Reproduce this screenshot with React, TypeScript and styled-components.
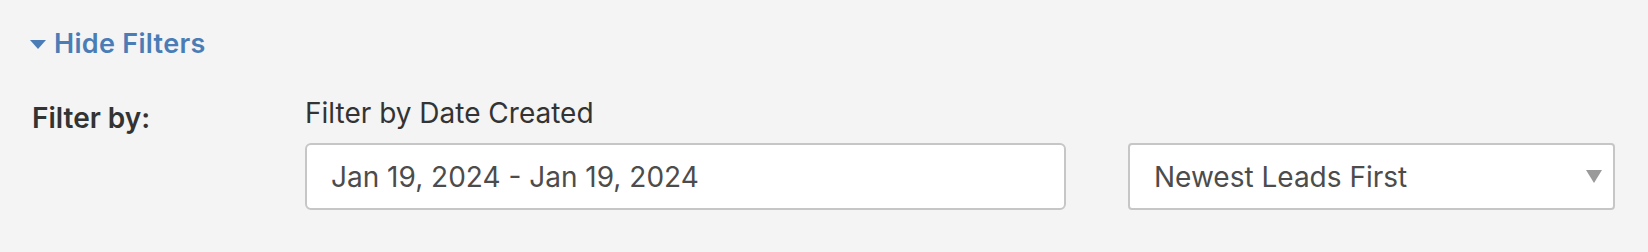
import styled, { createGlobalStyle } from "styled-components";

const GlobalStyle = createGlobalStyle`
  html, body {
    margin: 0;
    padding: 0;
    background-color: #f4f4f4;
  }
  body {
    font-family: Inter, "Noto Sans", sans-serif;
  }
`;

const Page = styled.div`
  width: 1648px;
  height: 252px;
  padding-top: 29px;
  box-sizing: border-box;
  background-color: #f4f4f4;
`;

const ToggleLink = styled.a`
  display: inline-flex;
  align-items: center;
  gap: 8px;
  margin-left: 30px;
  height: 30px;
  line-height: 30px;
  font-size: 27px;
  letter-spacing: 0.3px;
  font-weight: 600;
  color: #4a7db6;
  text-decoration: none;
  cursor: pointer;
`;

const Caret = styled.svg`
  width: 16px;
  height: 9px;
  fill: #4a7db6;
  margin-top: 1px;
`;

const FilterSection = styled.div`
  display: flex;
  margin-top: 38px;
`;

const SectionTitle = styled.div`
  width: 273px;
  padding-left: 32px;
  padding-top: 4px;
  font-size: 28px;
  line-height: 34px;
  font-weight: 600;
  color: #333333;
`;

const FieldGroup = styled.div`
  display: flex;
  flex-direction: column;
`;

const FieldLabel = styled.label`
  font-size: 28px;
  line-height: 32px;
  color: #333333;
  margin-bottom: 14px;
`;

const Controls = styled.div`
  display: flex;
  gap: 62px;
`;

const Field = styled.div<{ $width: number; $radius: number }>`
  width: ${(p) => p.$width}px;
  height: 67px;
  box-sizing: border-box;
  border: 2px solid #c6c6c6;
  border-radius: ${(p) => p.$radius}px;
  background-color: #ffffff;
  padding: 0 11px 0 24px;
  display: flex;
  align-items: center;
  justify-content: space-between;
  font-size: 28px;
  color: #4c4c4c;
`;

const SelectArrow = styled.svg`
  width: 16px;
  height: 13px;
  fill: #9a9a9a;
`;

export default function App() {
  return (
    <>
      <GlobalStyle />
      <Page>
        <ToggleLink>
          <Caret viewBox="0 0 16 9">
            <polygon points="0,0 16,0 8,9" />
          </Caret>
          Hide Filters
        </ToggleLink>
        <FilterSection>
          <SectionTitle>Filter by:</SectionTitle>
          <FieldGroup>
            <FieldLabel>Filter by Date Created</FieldLabel>
            <Controls>
              <Field $width={761} $radius={6}>
                <span>Jan 19, 2024 - Jan 19, 2024</span>
              </Field>
              <Field $width={487} $radius={4}>
                <span>Newest Leads First</span>
                <SelectArrow viewBox="0 0 16 13">
                  <polygon points="0,0 16,0 8,13" />
                </SelectArrow>
              </Field>
            </Controls>
          </FieldGroup>
        </FilterSection>
      </Page>
    </>
  );
}
